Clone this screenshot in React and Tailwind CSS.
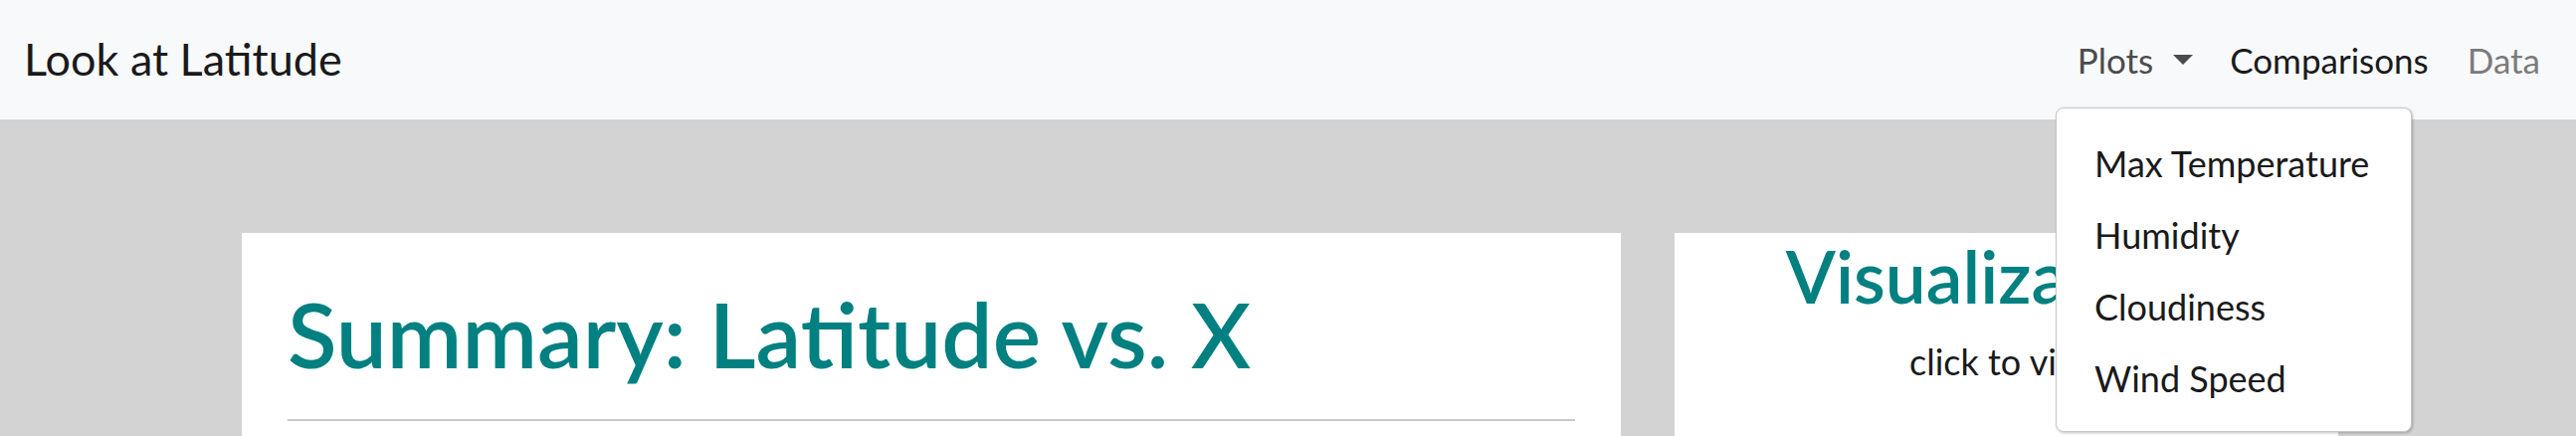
import React from "react";

const font = { fontFamily: 'Lato, "Open Sans", sans-serif' };

export default function App() {
  return (
    <div className="relative h-[438px] w-full overflow-hidden bg-[#d3d3d3]" style={font}>
      {/* Navbar */}
      <nav className="flex h-[120px] items-center justify-between bg-[#f8f9fa] pl-[24px] pr-[36px]">
        <a className="text-[45px] leading-none text-[#1a1a1a] -mt-[1px]">Look at Latitude</a>
        <div className="flex items-center text-[35px] leading-none">
          <a className="flex items-center text-[#4b4b4b]">
            Plots
            <span className="ml-[20px] inline-block h-0 w-0 border-x-[10.5px] border-t-[10.5px] border-x-transparent border-t-[#4b4b4b]" />
          </a>
          <a className="ml-[37px] text-[#1a1a1a]">Comparisons</a>
          <a className="ml-[39px] text-[#7b7b7b]">Data</a>
        </div>
      </nav>

      {/* Content */}
      <div className="flex gap-[54px] pl-[243px] pt-[114px]">
        <div className="h-[400px] w-[1386px] bg-white px-[46px] pt-[46px]">
          <h1 className="text-[91px] font-semibold leading-[1.2] text-[#008080]">Summary: Latitude vs. X</h1>
          <hr className="mt-[32px] border-t-2 border-[#c8c8c8]" />
        </div>
        <div className="h-[400px] w-[667px] bg-white pt-[7px] text-center">
          <h2 className="text-[73px] font-semibold leading-none text-[#008080]">Visualizations</h2>
          <p className="mt-[22px] text-[36px] leading-[1.5] text-[#1a1a1a]">click to view</p>
        </div>
      </div>

      {/* Dropdown menu */}
      <div className="absolute left-[2066px] top-[108px] w-[358px] rounded-[8px] border border-[#c8c8c8] bg-white pb-[17px] pt-[19px] shadow-[1px_1px_3px_rgba(0,0,0,0.25)]">
        {["Max Temperature", "Humidity", "Cloudiness", "Wind Speed"].map((t) => (
          <a key={t} className="block whitespace-nowrap px-[38px] py-[9px] text-[36px] leading-[54px] text-[#1a1a1a]">
            {t}
          </a>
        ))}
      </div>
    </div>
  );
}
